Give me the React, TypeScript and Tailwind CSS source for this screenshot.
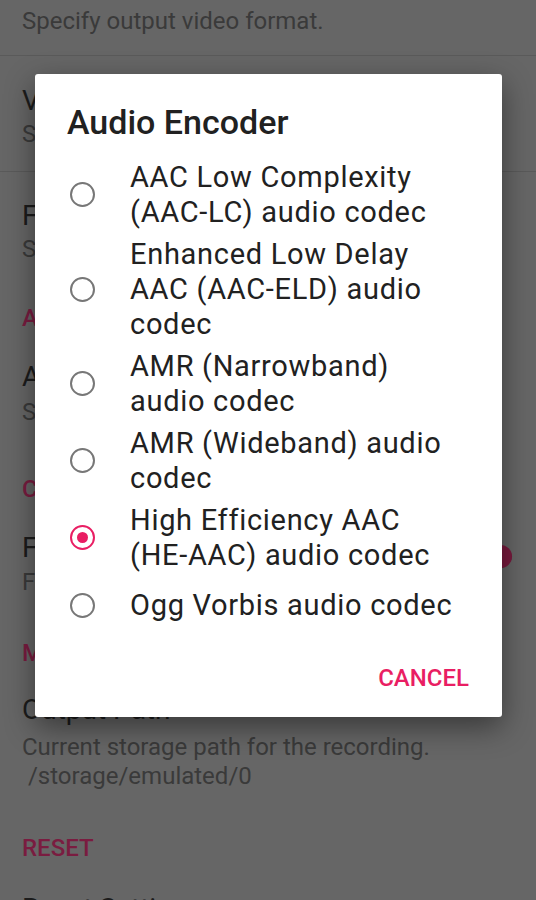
import React from 'react';

const font = { fontFamily: 'Roboto, "Noto Sans", "Liberation Sans", sans-serif' };

interface Option {
  label: React.ReactNode;
  key: string;
}

const nw = (s: string) => <span className="whitespace-nowrap">{s}</span>;

const OPTIONS: Option[] = [
  { key: 'aac-lc', label: <>AAC Low Complexity {nw('(AAC-LC)')} audio codec</> },
  { key: 'aac-eld', label: <>Enhanced Low Delay AAC {nw('(AAC-ELD)')} audio codec</> },
  { key: 'amr-nb', label: <>AMR (Narrowband) audio codec</> },
  { key: 'amr-wb', label: <>AMR (Wideband) audio codec</> },
  { key: 'he-aac', label: <>High Efficiency AAC {nw('(HE-AAC)')} audio codec</> },
  { key: 'vorbis', label: <>Ogg Vorbis audio codec</> },
];

const SELECTED = 4;

const Radio: React.FC<{ checked: boolean }> = ({ checked }) => (
  <div
    className={`w-[25px] h-[25px] shrink-0 rounded-full border-[2px] flex items-center justify-center ${
      checked ? 'border-[#e91e63]' : 'border-[#777777]'
    }`}
  >
    {checked && <div className="w-[11px] h-[11px] rounded-full bg-[#e91e63]" />}
  </div>
);

const App: React.FC = () => {
  return (
    <div className="relative w-full h-[900px] overflow-hidden bg-[#666666]" style={font}>
      {/* Settings page behind the dim */}
      <div className="flex flex-col px-[22px]">
        <p className="mt-[7px] text-[24px] leading-[29px] text-[#3a3a3a]">Specify output video format.</p>
        <div className="-mx-[22px] mt-[19px] h-px bg-[#5a5a5a]" />

        <p className="mt-[28px] text-[28px] leading-[34px] text-[#1c1c1c]">Video Encoder</p>
        <p className="mt-[2px] text-[24px] leading-[29px] text-[#3a3a3a]">Specify video encoder.</p>
        <div className="-mx-[22px] mt-[22px] h-px bg-[#5a5a5a]" />

        <p className="mt-[27px] text-[28px] leading-[34px] text-[#1c1c1c]">Frame Rate</p>
        <p className="mt-[2px] text-[24px] leading-[29px] text-[#3a3a3a]">Specify video frame rate.</p>

        <p className="mt-[39px] text-[24px] leading-[30px] font-medium text-[#7a1c40]">AUDIO</p>
        <p className="mt-[27px] text-[28px] leading-[34px] text-[#1c1c1c]">Audio Encoder</p>
        <p className="mt-[4px] text-[24px] leading-[29px] text-[#3a3a3a]">Specify audio encoder.</p>

        <p className="mt-[47px] text-[24px] leading-[30px] font-medium text-[#7a1c40]">CONTROLS</p>
        <div className="mt-[27px] flex items-start justify-between">
          <div className="flex flex-col">
            <p className="text-[28px] leading-[34px] text-[#1c1c1c]">Floating Controls</p>
            <p className="mt-[3px] text-[24px] leading-[29px] text-[#3a3a3a]">Floating controls window</p>
          </div>
          <div className="relative mt-[14px] mr-[2px] w-[46px] h-[23px] flex items-center">
            <div className="w-full h-[17px] rounded-full bg-[#5d2a3d]" />
            <div className="absolute right-0 top-0 w-[23px] h-[23px] rounded-full bg-[#7a1a3e]" />
          </div>
        </div>

        <p className="mt-[41px] text-[24px] leading-[30px] font-medium text-[#7a1c40]">MISC</p>
        <p className="mt-[25px] text-[28px] leading-[34px] text-[#1c1c1c]">Output Path</p>
        <p className="mt-[6px] text-[24px] leading-[29px] text-[#3a3a3a]">
          Current storage path for the recording.
          <br />
          &nbsp;/storage/emulated/0
        </p>

        <p className="mt-[42px] text-[24px] leading-[30px] font-medium text-[#7a1c40]">RESET</p>
        <p className="mt-[29px] text-[28px] leading-[34px] text-[#1c1c1c]">Reset Settings</p>
      </div>

      {/* Dialog */}
      <div className="absolute left-[35px] top-[74px] w-[467px] bg-white rounded-[3px] shadow-[0_10px_30px_rgba(0,0,0,0.45)] flex flex-col pt-[28px] pb-[24px]">
        <h2 className="pl-[32px] text-[34px] leading-[40px] font-medium text-[#212121]">Audio Encoder</h2>

        <div className="mt-[14px] flex flex-col">
          {OPTIONS.map((opt, i) => (
            <div
              key={opt.key}
              className={`flex items-center pl-[35px] ${i === OPTIONS.length - 1 ? 'py-[12px]' : 'py-[3.5px]'}`}
            >
              <Radio checked={i === SELECTED} />
              <span className="ml-[35px] w-[328px] text-[29px] leading-[35px] tracking-[0.7px] text-[#212121]">
                {opt.label}
              </span>
            </div>
          ))}
        </div>

        <div className="mt-[28px] flex justify-end pr-[33px]">
          <button className="text-[24px] leading-[30px] font-medium text-[#e91e63]">CANCEL</button>
        </div>
      </div>
    </div>
  );
};

export default App;
